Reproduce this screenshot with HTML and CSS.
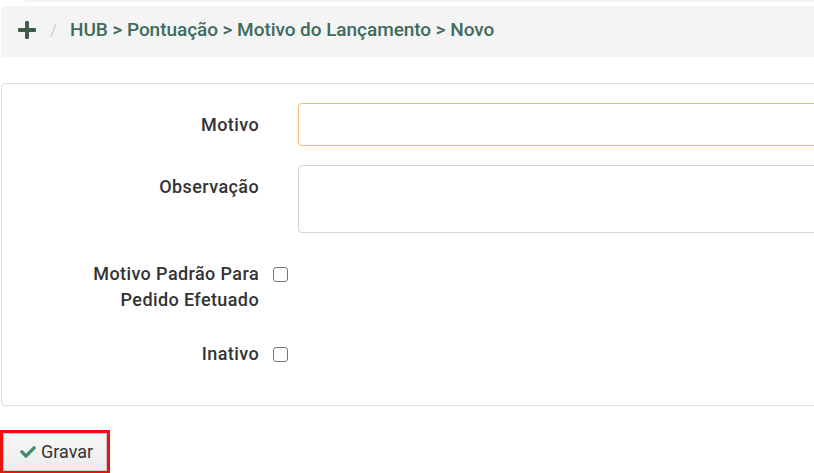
FILE: index.html
```html
<!DOCTYPE html>
<html lang="pt">
<head>
<meta charset="utf-8">
<title>Motivo do Lançamento - Novo</title>
<link rel="stylesheet" href="styles.css">
</head>
<body>
<div class="page">
  <div class="top-strip"></div>
  <nav class="breadcrumb">
    <svg class="plus" viewBox="0 32 448 448" aria-hidden="true"><path d="M416 208H272V64c0-17.67-14.33-32-32-32h-32c-17.67 0-32 14.33-32 32v144H32c-17.67 0-32 14.33-32 32v32c0 17.670 14.33 32 32 32h144v144c0 17.67 14.330 32 32 32h32c17.67 0 32-14.33 32-32V304h144c17.67 0 32-14.33 32-32v-32c0-17.67-14.33-32-32-32z"/></svg>
    <span class="sep">/</span>
    <span class="crumb">HUB &gt; Pontuação &gt; Motivo do Lançamento &gt; Novo</span>
  </nav>

  <form class="panel">
    <div class="form-group">
      <label class="label">Motivo</label>
      <div class="control"><input class="input focused" type="text"></div>
    </div>
    <div class="form-group">
      <label class="label">Observação</label>
      <div class="control"><textarea class="input textarea"></textarea></div>
    </div>
    <div class="form-group">
      <label class="label">Motivo Padrão Para<br>Pedido Efetuado</label>
      <div class="control"><span class="checkbox"></span></div>
    </div>
    <div class="form-group">
      <label class="label">Inativo</label>
      <div class="control"><span class="checkbox"></span></div>
    </div>
  </form>

  <div class="actions">
    <div class="highlight">
      <button class="btn" type="button">
        <svg class="check" viewBox="0 0 512 512" aria-hidden="true"><path d="M173.898 439.404l-166.4-166.4c-9.997-9.997-9.997-26.206 0-36.204l36.203-36.204c9.997-9.998 26.207-9.998 36.204 0L192 312.69 432.095 72.596c9.997-9.997 26.207-9.997 36.204 0l36.203 36.204c9.997 9.997 9.997 26.206 0 36.204l-294.4 294.401c-9.998 9.997-26.207 9.997-36.204-.001z"/></svg>
        <span>Gravar</span>
      </button>
    </div>
  </div>
</div>
</body>
</html>
```

FILE: styles.css
```css
html, body {
  margin: 0;
  padding: 0;
  background: #fff;
  overflow: hidden;
}

body {
  font-family: Roboto, "Liberation Sans", Arial, sans-serif;
  color: #333;
}

.page {
  width: 840px;
}

.top-strip {
  height: 2px;
  margin-left: 25px;
  background: #f3f4f4;
}

.breadcrumb {
  margin: 4px 0 0 1px;
  height: 51px;
  box-sizing: border-box;
  background: #f4f4f4;
  border-radius: 4px;
  display: flex;
  align-items: center;
  padding: 0 0 4px 17px;
}

.plus {
  width: 18px;
  height: 18px;
  fill: #3b5c46;
  margin-top: 1px;
}

.sep {
  color: #cfcfcf;
  font-size: 17px;
  margin: 0 13px 0 14px;
}

.crumb {
  color: #3f6b5c;
  font-size: 19px;
  font-weight: 500;
  letter-spacing: -0.05px;
}

.panel {
  margin: 26px 0 0 1px;
  border: 1px solid #dddddd;
  border-radius: 4px;
  padding: 19px 0 38px 0;
}

.form-group {
  display: grid;
  grid-template-columns: 257px 1fr;
  column-gap: 14px;
  margin-bottom: 19px;
}

.form-group:last-child {
  margin-bottom: 0;
}

.label {
  text-align: right;
  font-size: 18px;
  font-weight: 500;
  line-height: 26px;
  padding-top: 9px;
  color: #333;
  letter-spacing: 0.4px;
}

.control {
  display: flex;
  align-items: flex-start;
}

.input {
  margin-left: 25px;
  flex: 1;
  height: 43px;
  box-sizing: border-box;
  border: 1px solid #d5d5d5;
  border-radius: 4px;
  background: #fff;
  font: inherit;
  padding: 6px 12px;
  outline: none;
}

.input.focused {
  border-color: #f0b97a;
}

.textarea {
  height: 68px;
  resize: none;
}

.checkbox {
  display: block;
  width: 13px;
  height: 13px;
  margin-top: 15px;
  border: 1px solid #767676;
  border-radius: 3px;
  background: #fff;
}

.actions {
  margin-top: 24px;
}

.highlight {
  display: inline-block;
  border: 3px solid #ee1111;
  line-height: 0;
}

.btn {
  display: flex;
  align-items: center;
  gap: 4px;
  width: 104px;
  height: 38px;
  box-sizing: border-box;
  padding: 0 0 0 15px;
  border: 1px solid #c8c8c8;
  background: linear-gradient(#f7f7f7, #ebebeb);
  font-family: Roboto, "Liberation Sans", Arial, sans-serif;
  font-size: 18px;
  color: #333;
  line-height: 1;
}

.check {
  width: 18px;
  height: 16px;
  fill: #3f8a6d;
}
```
